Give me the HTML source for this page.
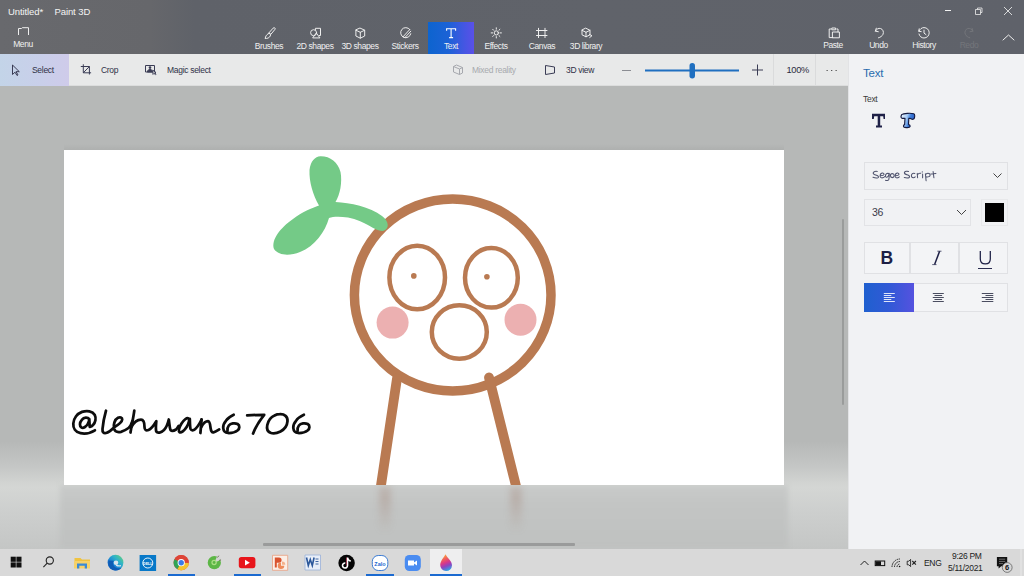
<!DOCTYPE html>
<html><head><meta charset="utf-8">
<style>
*{margin:0;padding:0;box-sizing:border-box}
html,body{width:1024px;height:576px;overflow:hidden;font-family:"Liberation Sans",sans-serif;background:#b7b9b8;position:relative}
.a{position:absolute}
#hdr{left:0;top:0;width:1024px;height:54px;background:linear-gradient(90deg,#68696d 0px,#66676b 150px,#5f6269 195px,#60636a 600px,#5f626a 1024px)}
#tb{left:0;top:54px;width:848px;height:32px;background:#e8e9e9;border-bottom:1px solid #dcdddd}
#work{left:0;top:86px;width:848px;height:463px;background:linear-gradient(180deg,#b6b8b7 0px,#b6b8b7 355px,#c4c6c5 380px,#d1d3d1 396px,#d4d6d4 402px,#cdcfce 425px,#c4c6c5 463px)}
#floor{left:60px;top:485px;width:728px;height:64px;background:linear-gradient(180deg,#c9cbca 0%,#c3c5c4 30%,#bfc1c0 100%);filter:blur(2px)}
#canvas{left:64px;top:150px;width:720px;height:335px;background:#fff;overflow:hidden}
#panel{left:848px;top:54px;width:176px;height:495px;background:#f1f2f4;border-left:1px solid #e2e3e5}
#task{left:0;top:549px;width:1024px;height:27px;background:#d9d9d9}
.wt{color:#f4f4f4;font-size:8px;white-space:nowrap}
.lbl{color:#f0f0f0;font-size:8.5px;letter-spacing:-0.4px;white-space:nowrap;text-align:center}
.tool{top:22px;height:32px;width:46px}
.tool .lbl{position:absolute;left:-10px;right:-10px;top:19px}
.tool svg{position:absolute;left:17px;top:5px}
.dk{color:#2f3147;font-size:8.5px;white-space:nowrap}
</style></head><body>
<div id="hdr" class="a"></div>
<!-- title -->
<div class="a wt" style="left:8px;top:6px;font-size:9.5px;letter-spacing:-0.1px">Untitled*</div><div class="a wt" style="left:54.5px;top:6px;font-size:9.5px;letter-spacing:-0.1px">Paint 3D</div>
<!-- window controls -->
<svg class="a" style="left:940px;top:4px" width="84" height="14" viewBox="0 0 84 14">
 <path d="M5 6.5H11" stroke="#f2f2f2" stroke-width="1"/>
 <path d="M37.5 5.5v-1.5h4.5v4.5h-1.5 M35.5 5.5h5v5h-5z" stroke="#eeeeee" stroke-width="0.8" fill="none"/>
 <path d="M64 3l8 8M72 3l-8 8" stroke="#eeeeee" stroke-width="0.85"/>
</svg>
<!-- menu -->
<svg class="a" style="left:16px;top:25px" width="14" height="12" viewBox="0 0 14 12">
 <path d="M2.5 10V3.5h3l0.8-0.8H12.5V10" fill="none" stroke="#eeeeee" stroke-width="1"/>
</svg>
<div class="a lbl" style="left:8px;top:39px;width:30px">Menu</div>
<!-- tools -->
<div class="a" style="left:428px;top:22px;width:46px;height:32px;background:linear-gradient(90deg,#0d64cf 0%,#1c62d6 45%,#4656e3 80%,#5a50e8 100%)"></div>
<div class="a lbl" style="left:249px;top:40.8px;width:40px">Brushes</div>
<div class="a lbl" style="left:293px;top:40.8px;width:44px">2D shapes</div>
<div class="a lbl" style="left:338px;top:40.8px;width:44px">3D shapes</div>
<div class="a lbl" style="left:385px;top:40.8px;width:40px">Stickers</div>
<div class="a lbl" style="left:431px;top:40.8px;width:40px">Text</div>
<div class="a lbl" style="left:476px;top:40.8px;width:40px">Effects</div>
<div class="a lbl" style="left:522px;top:40.8px;width:40px">Canvas</div>
<div class="a lbl" style="left:564px;top:40.8px;width:44px">3D library</div>
<div class="a lbl" style="left:813px;top:39.8px;width:40px">Paste</div>
<div class="a lbl" style="left:858.5px;top:39.8px;width:40px">Undo</div>
<div class="a lbl" style="left:904px;top:39.8px;width:40px">History</div>
<div class="a lbl" style="left:949px;top:39.8px;width:40px;color:#74767b">Redo</div>
<svg class="a" style="left:0;top:0" width="1024" height="54" viewBox="0 0 1024 54">
 <g fill="none" stroke="#eeeeee" stroke-width="1" stroke-linecap="round" stroke-linejoin="round">
  <!-- brushes -->
  <path d="M273.4 27.9a1.1 1.1 0 0 1 1.7 1.3l-4.2 5.1-1.6-1.3z"/>
  <path d="M269.1 33.3l1.6 1.3c-0.3 2-1.9 3.6-4 3.8l-1.6 0.1 0.5-1.5c0.5-1.6 1.6-3 3.5-3.7z"/>
  <!-- 2D shapes -->
  <circle cx="313.6" cy="32.7" r="3"/>
  <path d="M315.4 29.7v-1.4h5.1v7.2h-1.2"/>
  <path d="M312.9 37.6l3.4-4.6 3.4 4.6z"/>
  <!-- 3D shapes -->
  <path d="M360.3 28.2l4.4 2v5.8l-4.4 2.2-4.4-2.2v-5.8z M355.9 30.2l4.4 2.1 4.4-2.1 M360.3 32.3v5.8"/>
  <!-- stickers -->
  <path d="M409.8 29.5a5.1 5.1 0 1 0 1 4.2"/>
  <path d="M403 36.8l6.8-7.3 M405 37.5l5.8-6.3 M403 36.8c0.5 0.6 1.2 0.8 2 0.7"/>
  <!-- effects -->
  <circle cx="496.3" cy="32.9" r="2.1"/>
  <path d="M496.3 27.8v1.4M496.3 36.6v1.4M491.2 32.9h1.4M500 32.9h1.4M492.7 29.3l1 1M498.9 35.5l1 1M499.9 29.3l-1 1M493.7 35.5l-1 1"/>
  <!-- canvas -->
  <path d="M536.5 30.5h10.5M536.5 35.5h10.5M538.5 28.3v9.3M545 28.3v9.3"/>
  <!-- 3D library -->
  <path d="M586 28.3l4 2v4.5l-4 2-4-2v-4.5z M582 30.3l4 2 4-2 M586 32.3v4.5"/>
  <path d="M589.5 34.5l2.5 1.2-2.3 1.8"/>
  <!-- paste -->
  <path d="M831 29h-1.8v8.6h3.6 M832.2 28h3.4v1.8h-3.4z M836.8 29h1.2v2.8 M832.8 32h6.6v5.8h-6.6z"/>
  <!-- undo -->
  <path d="M876.3 28.2l-1 3 3 0.5 M875.5 31c1-2 3.2-3 5-2.5 2.5 0.7 3.5 3.5 2.5 5.8-0.8 1.7-2.5 3-4.5 3.5"/>
  <!-- history -->
  <path d="M919.2 28.8l-0.5 2.5 2.5 0.3 M919 31.1c0.8-2 2.8-3.5 5-3.5 3 0 5.2 2.3 5.2 5.2s-2.3 5.2-5.2 5.2c-2.5 0-4.5-1.7-5-4 M924 30.1v3l2 1.5"/>
  <!-- caret -->
  <path d="M1003 40l5.5-5 5.5 5"/>
 </g>
 <g fill="none" stroke="#74767b" stroke-width="1" stroke-linecap="round">
  <path d="M972 28.2l1 3-3 0.5 M972.8 31c-1-2-3.2-3-5-2.5-2.5 0.7-3.5 3.5-2.5 5.8 0.8 1.7 2.5 3 4.5 3.5"/>
 </g>
 <!-- Text T icon -->
 <g fill="none" stroke="#ffffff" stroke-width="1.1" stroke-linecap="butt">
  <path d="M446.5 28.8h9.2M451.1 28.8v8.8M449.1 37.6h4M446.6 28.3v2.4M455.6 28.3v2.4"/>
 </g>
</svg>

<div id="tb" class="a"></div>
<div class="a" style="left:0;top:54px;width:69px;height:32px;background:linear-gradient(90deg,#c3d4e8 0%,#c9cfea 60%,#cfcbea 100%)"></div>
<svg class="a" style="left:0;top:54px" width="848" height="32" viewBox="0 54 848 32">
 <g fill="none" stroke="#3a3c55" stroke-width="1" stroke-linejoin="round">
  <path d="M12.5 65v9.5l2.5-2.3 2 3.3 1-0.6-2-3.2h3.3z"/>
  <path d="M80.8 66.5h8.6v8 M83.3 64.3v8.5h7.8 M83.3 72.8l6.1-6.3"/>
  <path d="M145.5 65.5h9v6.5h-9z"/><circle cx="150" cy="67.6" r="1.3" fill="#3a3c55" stroke="none"/><path d="M147.3 72c0.3-1.8 1.3-2.6 2.7-2.6s2.4 0.8 2.7 2.6z" fill="#3a3c55"/><path d="M152.8 70.2l0.2 4.2 1-1 1.5 1.3 0.5-0.5-1.3-1.4 1.3-0.3z" fill="#e8e9e9"/>
 </g>
 <g fill="none" stroke="#a6a8ae" stroke-width="1">
  <path d="M453.5 66.5l6 2.5v5.5l-6-2.5z M453.5 66.5l3-1.5 6 2.5-3 1.5 M462.5 67.5v5.5l-3 1.5"/>
 </g>
 <g fill="none" stroke="#3a3c55" stroke-width="1">
  <path d="M545.5 65.5l9 1.5v6l-9 1.5z"/>
  <path d="M622 70.5h9" stroke="#8b8d93"/>
  <path d="M757.5 64.5v11M752 70h11"/>
  <path d="M826.5 70.5h1.3M831 70.5h1.3M835.5 70.5h1.3" stroke="#555"/>
 </g>
 <path d="M645 70.5H739" stroke="#1f6fc0" stroke-width="2"/>
 <rect x="689.5" y="63" width="5.5" height="15.5" rx="2.7" fill="#1f6fc0"/>
 <path d="M773.5 54v31M815.5 54v31" stroke="#dadbdc" stroke-width="1"/>
</svg>
<div class="a dk" style="left:32px;top:65px;font-size:8.5px;letter-spacing:-0.3px">Select</div>
<div class="a dk" style="left:101px;top:65px;font-size:8.5px;letter-spacing:-0.3px">Crop</div>
<div class="a dk" style="left:167px;top:65px;font-size:8.5px;letter-spacing:-0.3px">Magic select</div>
<div class="a dk" style="left:472px;top:65px;font-size:8.5px;letter-spacing:-0.3px;color:#a7a9ae">Mixed reality</div>
<div class="a dk" style="left:566px;top:65px;font-size:8.5px;letter-spacing:-0.3px">3D view</div>
<div class="a dk" style="left:786.5px;top:65.2px;font-size:9.3px;letter-spacing:-0.35px;color:#2a2c3c">100%</div>

<div id="work" class="a"></div>
<div id="floor" class="a"></div>
<div class="a" style="left:379px;top:486px;width:12px;height:46px;background:linear-gradient(180deg,rgba(160,125,110,0.22),rgba(160,125,110,0.3) 25%,rgba(160,125,110,0.12) 70%,rgba(160,125,110,0));filter:blur(3px)"></div>
<div class="a" style="left:510px;top:486px;width:12px;height:46px;background:linear-gradient(180deg,rgba(160,125,110,0.22),rgba(160,125,110,0.3) 25%,rgba(160,125,110,0.12) 70%,rgba(160,125,110,0));filter:blur(3px)"></div>
<div class="a" style="left:842px;top:219px;width:2px;height:186px;background:#9a9c9b;border-radius:1px"></div>
<div class="a" style="left:263px;top:543px;width:312px;height:3px;background:#9a9b9b;border-radius:1px"></div>
<div class="a" style="left:64px;top:144px;width:720px;height:6px;background:linear-gradient(180deg,rgba(0,0,0,0),rgba(0,0,0,0.045))"></div>
<div id="canvas" class="a"></div>
<svg class="a" style="left:0;top:0" width="1024" height="576" viewBox="0 0 1024 576">
 <defs><clipPath id="cv"><rect x="64" y="150" width="720" height="335"/></clipPath></defs>
 <g clip-path="url(#cv)">
  <g fill="#ecb0b1">
   <circle cx="392.6" cy="322.6" r="16"/>
   <circle cx="520.5" cy="319.8" r="16"/>
  </g>
  <g fill="none" stroke="#b97a52" stroke-linecap="round">
   <ellipse cx="452.7" cy="295" rx="98.3" ry="96" stroke-width="9.5"/>
   <ellipse cx="417.2" cy="277.5" rx="27.8" ry="31.7" stroke-width="4.5"/>
   <ellipse cx="491.4" cy="277.8" rx="26.4" ry="29.8" stroke-width="4.5"/>
   <ellipse cx="459.3" cy="332" rx="27.5" ry="26.8" stroke-width="4.5"/>
   <path d="M397 378.5L380 492" stroke-width="9.8"/>
   <path d="M489 377.5L517.5 492" stroke-width="9.8"/>
  </g>
  <g fill="#b97a52">
   <circle cx="413.8" cy="275.9" r="2.8"/>
   <circle cx="486.9" cy="276.8" r="2.8"/>
  </g>
  <path fill="#74ca87" d="M320.4,156.2 C330,156 338,162 340.5,172 C342.5,182 340,195 335.5,202 C350,202.5 370,207 382,216 C389,221 390,229 383,231 C376,232 366,221 348,217.5 C340,216.5 333,216.5 329,218 C325,232 315,246 300,252 C290,256 279,256 274,249 C271,240 280,228 293,219 C302,212 312,208 319,205.5 C313,195 309,182 309.5,170 C310.5,161 315,156.5 320.4,156.2 Z"/>
  <g fill="none" stroke="#0d0d0d" stroke-width="2.75" stroke-linecap="round" stroke-linejoin="round">
   <path d="M94.9,430.3 C91,432.8 85,434 80.5,433.2 C75.5,432.3 73,428 73.3,423.5 C73.6,418.5 77,413.8 82,411.9 C87,410.2 92.5,411 94.8,415 C96.3,418 95.5,422.5 93,425 C92,426 91,426.6 90.3,426.8"/>
   <path d="M89.3,419.2 C87.8,417.3 84,417 81.8,419.8 C79.5,422.5 79.3,426.5 81.5,427.6 C83.5,428.5 86.5,426.5 88,423.5 C88.8,422 89.2,420.5 89.3,419.2 L89.7,426.8"/>
   <path d="M106,410.7 C104.5,416 103,423 102.5,429 C102.3,432 103.5,433.5 106,433 C108.5,432.5 111,430.5 114.5,427 C118,425 122,422.5 122.2,419.5 C122.3,417.5 120,416.8 118,417.8 C114.5,419.5 113.2,425 114,428.5 C114.8,431.5 117.5,432.5 121,431.8 C124,431 126.5,429.5 128.5,428 C130.5,426.5 131.5,424 132.5,421"/>
   <path d="M134.3,410.7 C133.5,417 131.5,426 130.5,432.5"/>
   <path d="M131.5,427 C134,422 138,419.5 141,419.5 C144,419.5 144.5,423 144.5,427 C144.5,430 146,431 148.5,430 C151,429 154,425 156.3,421.2 C156,425 155.5,429 156.3,431.5 C157.5,433.5 161,432.8 164,430 C166,428 168,423 168.8,419.5 C169.5,424 169.5,428 170.5,430 C171.5,431 174,430.8 176,429.5 C177,428.8 178,426.8 178.7,425.9"/>
   <ellipse cx="184" cy="425.3" rx="8.2" ry="3.1" transform="rotate(-57.8 184 425.3)"/>
   <path d="M189.8,418.8 C190,422 189.8,427 190.6,429 C191.4,430.8 193.5,430.5 195,429.2 C197,427.5 199,425 201.6,419.5"/>
   <path d="M201.6,419.5 C201.2,424 200.8,429 200.4,433"/>
   <path d="M201.3,427 C203,424 205.5,421.2 208,421.2 C210,421.4 210.2,425 210.6,428.3 C211,431 212,432.6 213.5,432.3 C215.5,432 217.5,430.5 219.2,429.4"/>
   <path d="M233.7,414.8 C230,416.5 227.5,418.5 226.1,420.6 C224,423 223,425.5 223.2,428 C223.5,431 225,432.9 228,433 C231.5,433.1 235,432.5 237.5,430.5 C239.8,428.7 240,425.5 237.6,424 C235,422.7 230.5,423.3 228.8,425.5 C227.6,427 227.3,429 227.5,431"/>
   <path d="M247.2,415.4 C253,415 259,414.8 264.2,414.8 C260,420 255.5,427 253.1,433.5"/>
   <path d="M279.9,414.2 C284.5,414 287.8,416.5 287.5,421.2 C287.2,425.5 284.5,429.5 280.5,431.5 C277,433.3 273,433.8 270.5,432.8 C267.5,431.5 266.5,428.5 267.3,425 C268.2,421 271,417 274.5,415.5 C276.3,414.6 278,414.2 279.9,414.2"/>
   <path d="M303.9,414.8 C300.2,416.5 297.6,418.5 296.2,420.6 C294.1,423 293.1,425.5 293.3,428 C293.6,431 295.1,432.9 298.1,433 C301.6,433.1 305.1,432.5 307.6,430.5 C309.9,428.7 310.1,425.5 307.7,424 C305.1,422.7 300.6,423.3 298.9,425.5 C297.7,427 297.4,429 297.6,431"/>
  </g>
 </g>
</svg>
<div id="panel" class="a"></div>
<div class="a" style="left:863px;top:66.5px;font-size:11.5px;color:#2a6cae;letter-spacing:-0.2px">Text</div>
<div class="a" style="left:863px;top:93.5px;font-size:8.5px;color:#3a3a3a;letter-spacing:-0.3px">Text</div>
<svg class="a" style="left:0;top:0;overflow:visible" width="1" height="1">
 <defs><linearGradient id="t3d" x1="0" y1="0" x2="1" y2="0.3"><stop offset="0" stop-color="#f4f9ff"/><stop offset="0.45" stop-color="#a9cdf5"/><stop offset="0.7" stop-color="#3f7fdc"/><stop offset="1" stop-color="#2a5cc0"/></linearGradient></defs>
 <path d="M872,113.8 H885 V119 H883.6 L883.2,116.3 H880.2 V125.5 H882 V127.4 H876 V125.5 H877.7 V116.3 H874.2 L873.8,119 H872 Z" fill="#1f2147"/>
 <path d="M901.6,114.6 C903.5,113.2 911,113 913.8,113.7 C915,114.1 914.9,117 914.2,118.4 C913.6,119.5 912.2,119.5 911.5,119 L910.3,118.4 L908.8,118.3 L908.5,124.4 C909.5,124.8 910.4,125.5 910.1,126.5 C909.7,127.8 905,128 903.9,127 C903.1,126.2 903.5,125 904.6,124.6 L905,118.4 L903.1,118.2 C902,118.6 901,118.1 901,116.5 Z" fill="url(#t3d)" stroke="#141a40" stroke-width="1.15" stroke-linejoin="round"/>
</svg>
<div class="a" style="left:864px;top:161.5px;width:144px;height:28.5px;border:1px solid #e0e1e4;background:#f1f2f4"></div>
<svg class="a" style="left:0;top:0;overflow:visible" width="1" height="1"><g fill="none" stroke="#50546e" stroke-width="1.05" stroke-linecap="round" stroke-linejoin="round">
 <path d="M877.3,171.4 C875.8,171 873.5,171.5 873.2,172.8 C873,174 874.5,174.8 876.5,175.3 C878.5,175.9 878.9,177 878.2,177.6 C877,178.3 874.5,177.9 873,177.3"/>
 <path d="M880.5,175.7 C882,175.6 883.8,175.3 884,174.6 C884.2,173.5 883.3,172.9 882.2,173.1 C880.8,173.5 880,175 880.1,176.5 C880.3,177.6 881.5,178 882.8,177.8 C883.8,177.6 884.4,177 884.8,176.5"/>
 <path d="M888.9,173.6 C887.5,173 886,173.7 885.6,175 C885.2,176.4 885.8,177.4 886.8,177.2 C888,177 888.9,175 889.3,173.4 C889.3,175.5 889.2,178 888.8,179.5 C888.4,180.6 886.8,180.8 885.5,180.3"/>
 <ellipse cx="892.3" cy="175.6" rx="1.9" ry="2"/>
 <path d="M895.7,175.7 C897,175.6 898.6,175.3 898.9,174.6 C899.1,173.5 898.3,172.9 897.2,173.1 C895.8,173.5 895,175 895.1,176.5 C895.3,177.6 896.5,178 897.8,177.8 C898.6,177.6 899,177.2 899.3,176.9"/>
 <path d="M908.6,171.4 C907.1,171 904.8,171.3 904.4,172.5 C904.2,173.8 905.8,174.6 907.8,175.1 C909.6,175.7 909.9,176.9 909.2,177.5 C908.2,178.2 905.8,178 904.3,177.6"/>
 <path d="M914.8,173.5 C913.5,173.1 912,173.5 911.5,175 C911.1,176.5 911.8,177.6 913.3,177.7 C914.2,177.7 914.8,177.3 915.2,176.9"/>
 <path d="M917.2,173.4 L917.6,177.7 M917.5,174.6 C918.2,173.6 919.3,172.9 920.7,173.3"/>
 <path d="M922.6,173.9 L922.6,177.7"/>
 <path d="M925.4,173.8 L926.1,180.8 M925.7,174.3 C926.8,173.4 928.6,173.1 929.6,173.8 C930.5,174.6 930.2,176 929,176.6 C928,177.1 926.8,177.1 926,176.8"/>
 <path d="M933.1,171.5 L933.9,177.8 M930.8,173.9 L935.9,173.4"/>
</g><circle cx="922.3" cy="171.9" r="0.6" fill="#50546e"/></svg>
<svg class="a" style="left:990px;top:170px" width="14" height="10" viewBox="0 0 14 10"><path d="M3.5 3.5l4 4 4-4" fill="none" stroke="#444" stroke-width="1"/></svg>
<div class="a" style="left:864px;top:198.5px;width:107px;height:27.5px;border:1px solid #e2e3e6;background:#f1f2f4"></div>
<div class="a" style="left:872px;top:206px;font-size:10.5px;color:#3a3a4a;letter-spacing:-0.3px">36</div>
<svg class="a" style="left:954px;top:207px" width="14" height="10" viewBox="0 0 14 10"><path d="M3 3l4.5 4.5 4.5-4.5" fill="none" stroke="#444" stroke-width="1"/></svg>
<div class="a" style="left:980.5px;top:198.5px;width:27.5px;height:27.5px;border:1px solid #e8e9eb;background:#f1f2f4"></div>
<div class="a" style="left:984.5px;top:202.5px;width:19.8px;height:19.5px;background:#000"></div>
<div class="a" style="left:864px;top:242px;width:46px;height:31.5px;border:1px solid #e0e1e4;background:#f3f4f6"></div>
<div class="a" style="left:910px;top:242px;width:49px;height:31.5px;border:1px solid #e0e1e4;background:#f3f4f6"></div>
<div class="a" style="left:959px;top:242px;width:49px;height:31.5px;border:1px solid #e0e1e4;background:#f3f4f6"></div>
<div class="a" style="left:880.5px;top:247.5px;font-weight:bold;font-size:17.5px;color:#1d1f45;line-height:20px">B</div>
<svg class="a" style="left:0;top:0;overflow:visible" width="1" height="1"><path d="M939.6 251.2L934.6 264.6" stroke="#1d1f45" stroke-width="1.5"/><path d="M937.3 251.2h4.2M932.2 264.6h4.3" stroke="#1d1f45" stroke-width="0.7"/></svg>
<svg class="a" style="left:0;top:0;overflow:visible" width="1" height="1"><path d="M980.3 251v8c0 3.1 2 4.9 5 4.9s5-1.8 5-4.9v-8" fill="none" stroke="#1d1f45" stroke-width="1.25"/></svg>
<div class="a" style="left:977.8px;top:267.5px;width:14.5px;height:1.3px;background:#2a2c50"></div>
<div class="a" style="left:864px;top:282.5px;width:144px;height:29.5px;border:1px solid #e0e1e4;background:#f3f4f6"></div>
<div class="a" style="left:864px;top:282.5px;width:50px;height:29.5px;background:linear-gradient(90deg,#1f60cf 0%,#3159d6 50%,#5552df 100%)"></div>
<svg class="a" style="left:864px;top:282px" width="144" height="30" viewBox="0 0 144 30">
 <g stroke-width="0.85">
  <path d="M19.8 11.5h11M19.8 13.5h7.5M19.8 15.5h11M19.8 17.5h7.5M19.8 19.5h11" stroke="#ffffff"/>
  <path d="M68.8 11.5h11M70.5 13.5h7.6M68.8 15.5h11M70.5 17.5h7.6M68.8 19.5h11" stroke="#2c2e44"/>
  <path d="M117.8 11.5h11.5M121.5 13.5h7.8M117.8 15.5h11.5M121.5 17.5h7.8M117.8 19.5h11.5" stroke="#2c2e44"/>
 </g>
</svg>
<div id="task" class="a"></div>
<div class="a" style="left:430px;top:549px;width:32px;height:27px;background:#eeeeef"></div>
<div class="a" style="left:168px;top:574px;width:27px;height:2px;background:#1b6ad0"></div>
<div class="a" style="left:234px;top:574px;width:27px;height:2px;background:#1b6ad0"></div>
<div class="a" style="left:366px;top:574px;width:28px;height:2px;background:#1b6ad0"></div>
<div class="a" style="left:430px;top:574px;width:32px;height:2px;background:#1b6ad0"></div>
<svg class="a" style="left:0;top:549px" width="1024" height="27" viewBox="0 549 1024 27">
 <!-- windows -->
 <g fill="#111">
  <rect x="10.7" y="556.7" width="5.1" height="5.1"/><rect x="16.4" y="556.7" width="5.1" height="5.1"/>
  <rect x="10.7" y="562.4" width="5.1" height="5.1"/><rect x="16.4" y="562.4" width="5.1" height="5.1"/>
 </g>
 <!-- search -->
 <g fill="none" stroke="#222" stroke-width="1.1"><circle cx="49.8" cy="560.5" r="3.6"/><path d="M47.2 563.2l-3.8 4"/></g>
 <!-- explorer -->
 <path d="M74.5 558h6l1.5 1.5h8v4h-15.5z" fill="#f0c340"/>
 <path d="M74 561h16v7.5h-16z" fill="#f6d26a"/>
 <path d="M77 563.5h10v5h-2.3v-2.8h-5.4v2.8h-2.3z" fill="#3a8ad6"/>
 <!-- edge -->
 <defs><linearGradient id="edg" x1="1" y1="0" x2="0" y2="1"><stop offset="0" stop-color="#6fd66a"/><stop offset="0.35" stop-color="#2fb3c8"/><stop offset="0.65" stop-color="#1a7ed6"/><stop offset="1" stop-color="#1458b8"/></linearGradient></defs>
 <circle cx="115.5" cy="562.6" r="7.9" fill="url(#edg)"/>
 <path d="M108.5 560.5c-1 4 1 8.5 5.5 9.8 3 0.8 6-0.3 7.5-2.5-2.5 1-5.5 0.5-7.3-1.5-1.5-1.6-1.7-4-0.3-5.5" fill="#0f5cb5"/>
 <circle cx="116" cy="562.8" r="2.3" fill="#d8e4ee"/>
 <path d="M116 565.1c1.5 0.8 3.5 1 5 0.5" stroke="#d8e4ee" stroke-width="1.2" fill="none"/>
 <!-- dell -->
 <rect x="139.6" y="555" width="16.5" height="16" fill="#0778c8"/>
 <circle cx="147.8" cy="563" r="5" fill="none" stroke="#fff" stroke-width="0.9"/>
 <text x="147.8" y="564.5" font-family="Liberation Sans" font-size="3.6" font-weight="bold" fill="#fff" text-anchor="middle">DELL</text>
 <!-- chrome -->
 <circle cx="181.2" cy="562.7" r="7.6" fill="#de4437"/>
 <path d="M181.2 562.7L174.6 558.9A7.6 7.6 0 0 0 177.4 569.3z" fill="#32a354"/>
 <path d="M181.2 562.7L177.4 569.3A7.6 7.6 0 0 0 188.8 562.7z" fill="#f5c330"/>
 <path d="M181.2 562.7L188.8 562.7A7.6 7.6 0 0 0 181.2 555.1 7.6 7.6 0 0 0 174.6 558.9z" fill="#de4437"/>
 <circle cx="181.2" cy="562.7" r="3.6" fill="#fff"/><circle cx="181.2" cy="562.7" r="2.7" fill="#3b7be8"/>
 <!-- coccoc -->
 <circle cx="214.3" cy="562.7" r="6.6" fill="#5cb646"/>
 <path d="M214.3 562.7L217.5 555.2A6.6 6.6 0 0 1 221.5 559.5z" fill="#d4d4d4"/>
 <circle cx="214.1" cy="562.5" r="2.7" fill="#a8de82"/>
 <circle cx="214.1" cy="562.5" r="1.4" fill="#5cb646"/>
 <path d="M217.5 557.5l1.3-1.8M219.2 560.4l1.8-0.5" stroke="#6a6a50" stroke-width="0.9"/>
 <!-- youtube -->
 <rect x="238.8" y="557" width="16.6" height="11.2" rx="2.6" fill="#e8151b"/>
 <path d="M245 559.8v5.8l4.8-2.9z" fill="#fff"/>
 <!-- ppt -->
 <rect x="272.5" y="555.3" width="15.2" height="15" fill="#fbeee6"/>
 <path d="M272.5 555.3h15.2v15h-15.2z" fill="none" stroke="#e9a080" stroke-width="0.8"/>
 <path d="M274.8 557.5h4.2a2.6 2.6 0 0 1 0 5.2h-2.2v4.8h-2z" fill="#d9532f"/>
 <path d="M281 562.5a3.3 3.3 0 1 0 3.3 3.3h-3.3z" fill="#ef8a5a"/>
 <path d="M282 561.5v3.3h3.3a3.3 3.3 0 0 0-3.3-3.3z" fill="#f5b08a"/>
 <!-- word -->
 <rect x="305" y="555" width="15.5" height="15" fill="#e8eef8"/>
 <path d="M305 555h15.5v15h-15.5z" fill="none" stroke="#9bb1d8" stroke-width="0.8"/>
 <path d="M306.5 557.5l1.8 8 2-6 2 6 1.8-8" stroke="#2b579a" stroke-width="1.6" fill="none"/>
 <path d="M315.5 559h3M315.5 561.5h3M315.5 564h3" stroke="#2b579a" stroke-width="0.9"/>
 <!-- tiktok -->
 <circle cx="346.6" cy="563" r="8.2" fill="#050505"/>
 <path d="M347.5 557.5v8a2.5 2.5 0 1 1-2.2-2.5" stroke="#fff" stroke-width="1.6" fill="none"/>
 <path d="M347.5 558c0.5 1.8 1.8 2.8 3.3 3" stroke="#fff" stroke-width="1.4" fill="none"/>
 <path d="M346.5 557.5v8" stroke="#ee2a5a" stroke-width="0.6" fill="none" opacity="0.8"/>
 <!-- zalo -->
 <rect x="372.3" y="555.5" width="15.5" height="15" rx="6" fill="#ffffff" stroke="#2a70d0" stroke-width="0.9"/>
 <text x="380" y="565.5" font-family="Liberation Sans" font-size="5.5" font-weight="bold" fill="#1b6ad0" text-anchor="middle">Zalo</text>
 <!-- zoom -->
 <rect x="404.8" y="555" width="16" height="16" rx="4.5" fill="#4a8cf1"/>
 <path d="M408 560.5h6v5h-6z M414 562.5l3-2v5l-3-2z" fill="#fff"/>
 <!-- paint 3d -->
 <defs><linearGradient id="p3d" x1="0.3" y1="0" x2="0.6" y2="1"><stop offset="0" stop-color="#fbb03b"/><stop offset="0.28" stop-color="#f0605a"/><stop offset="0.5" stop-color="#d8388a"/><stop offset="0.7" stop-color="#8e44c0"/><stop offset="1" stop-color="#2aa8e8"/></linearGradient></defs>
 <path d="M445.5 554.3c-1.2 2.6-5.3 6.5-5.3 10.8a5.9 5.9 0 0 0 11.8 0.2c0-3.8-3.8-6.3-6.5-11z" fill="url(#p3d)"/>
 <!-- tray -->
 <path d="M860.5 565l4-4 4 4" fill="none" stroke="#222" stroke-width="1"/>
 <rect x="875.2" y="561" width="9.5" height="4.6" fill="none" stroke="#111" stroke-width="1"/>
 <rect x="875.5" y="561.3" width="5.5" height="4" fill="#111"/>
 <g fill="none" stroke="#222" stroke-width="1" stroke-dasharray="1.6 0.7">
  <path d="M897 567a3 3 0 0 1 3-3M894.5 567a5.5 5.5 0 0 1 5.5-5.5M892 567a8 8 0 0 1 8-8"/>
 </g>
 <circle cx="899.6" cy="566.5" r="0.8" fill="#111"/>
 <g fill="none" stroke="#222" stroke-width="0.9">
  <path d="M907.2 561.2h1.6l1.8-1.8v7.2l-1.8-1.8h-1.6z"/>
  <path d="M912.3 561l3.6 3.6M915.9 561l-3.6 3.6" stroke-width="1.1"/>
 </g>
 <path d="M996.9 556.9h10.3v9.3h-6l-2.6 2.4v-2.4h-1.7z" fill="#111"/>
 <path d="M999 559.2h6.2M999 561.4h6.2M999 563.6h4" stroke="#aaa" stroke-width="0.6"/>
 <circle cx="1007.2" cy="567.5" r="4.9" fill="#d6d6d6" stroke="#555" stroke-width="0.7"/>
 <text x="1007.2" y="570.3" font-family="Liberation Sans" font-size="7.5" font-weight="bold" fill="#111" text-anchor="middle">6</text>
 <path d="M1021 549v27" stroke="#e6e6e6" stroke-width="1.2"/>
</svg>
<div class="a" style="left:924px;top:557.5px;font-size:8.5px;color:#222;letter-spacing:-0.3px">ENG</div>
<div class="a" style="left:952px;top:550.5px;font-size:8.5px;color:#222;letter-spacing:-0.3px">9:26 PM</div>
<div class="a" style="left:948px;top:563px;font-size:8.5px;color:#222;letter-spacing:-0.3px">5/11/2021</div>
</body></html>
